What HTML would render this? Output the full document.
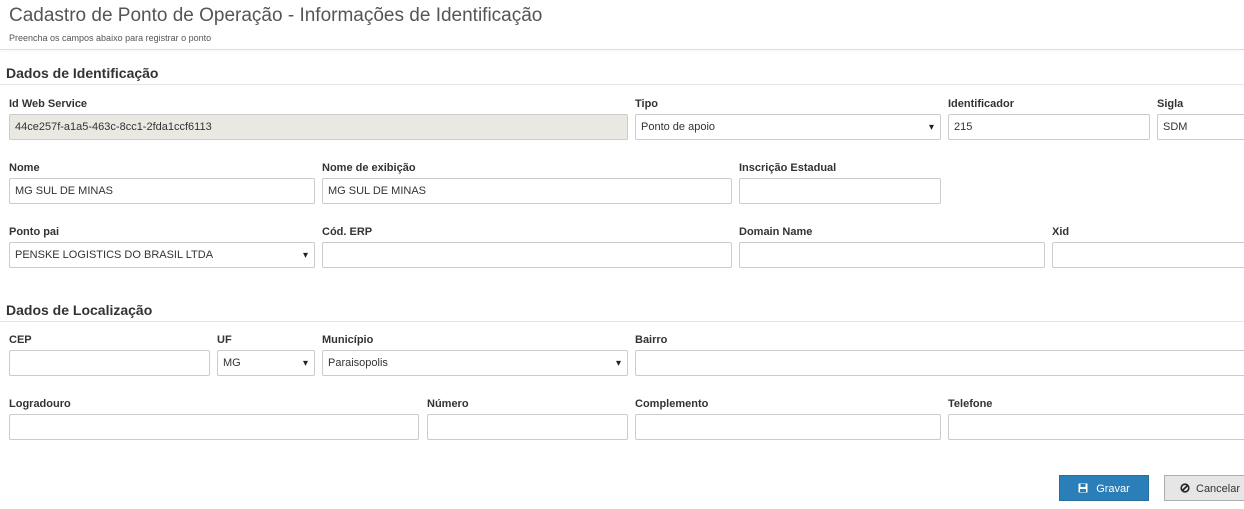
<!DOCTYPE html>
<html><head><meta charset="utf-8"><style>
body{margin:0;width:1244px;height:509px;background:#fff;overflow:hidden;position:relative;font-family:"Liberation Sans",sans-serif;color:#333}
.a{position:absolute}
.t{left:9px;top:5px;font-size:19px;color:#555}
.st{left:9px;top:33px;font-size:9px;color:#555}
.hr{left:0;right:0;height:1px;background:#e5e5e5}
.h{left:6px;font-size:14px;font-weight:bold;color:#333}
.l{font-size:11px;font-weight:bold;color:#333}
.i{height:24px;border:1px solid #ccc;border-radius:2px;background:#fff;font-size:11px;line-height:25px;padding-left:5px;box-sizing:content-box;color:#333}
.s:after{content:"▾";position:absolute;right:6px;top:0;font-size:10px;color:#222}
.btn{height:26px;font-size:11px;line-height:26px;text-align:center;box-sizing:border-box}
</style></head><body>
<div class="a t">Cadastro de Ponto de Operação - Informações de Identificação</div>
<div class="a st">Preencha os campos abaixo para registrar o ponto</div>
<div class="a hr" style="top:49px;background:#ddd;box-shadow:0 1px 2px #eee"></div>
<div class="a h" style="top:65px">Dados de Identificação</div>
<div class="a hr" style="top:84px"></div>

<div class="a l" style="left:9px;top:98px">Id Web Service</div>
<div class="a i" style="left:9px;top:114px;width:612px;background:#e9e8e3">44ce257f-a1a5-463c-8cc1-2fda1ccf6113</div>
<div class="a l" style="left:635px;top:98px">Tipo</div>
<div class="a i s" style="left:635px;top:114px;width:299px">Ponto de apoio</div>
<div class="a l" style="left:948px;top:98px">Identificador</div>
<div class="a i" style="left:948px;top:114px;width:195px">215</div>
<div class="a l" style="left:1157px;top:98px">Sigla</div>
<div class="a i" style="left:1157px;top:114px;width:100px">SDM</div>

<div class="a l" style="left:9px;top:162px">Nome</div>
<div class="a i" style="left:9px;top:178px;width:299px">MG SUL DE MINAS</div>
<div class="a l" style="left:322px;top:162px">Nome de exibição</div>
<div class="a i" style="left:322px;top:178px;width:403px">MG SUL DE MINAS</div>
<div class="a l" style="left:739px;top:162px">Inscrição Estadual</div>
<div class="a i" style="left:739px;top:178px;width:195px"></div>

<div class="a l" style="left:9px;top:226px">Ponto pai</div>
<div class="a i s" style="left:9px;top:242px;width:299px">PENSKE LOGISTICS DO BRASIL LTDA</div>
<div class="a l" style="left:322px;top:226px">Cód. ERP</div>
<div class="a i" style="left:322px;top:242px;width:403px"></div>
<div class="a l" style="left:739px;top:226px">Domain Name</div>
<div class="a i" style="left:739px;top:242px;width:299px"></div>
<div class="a l" style="left:1052px;top:226px">Xid</div>
<div class="a i" style="left:1052px;top:242px;width:200px"></div>

<div class="a h" style="top:302px">Dados de Localização</div>
<div class="a hr" style="top:321px"></div>

<div class="a l" style="left:9px;top:334px">CEP</div>
<div class="a i" style="left:9px;top:350px;width:194px"></div>
<div class="a l" style="left:217px;top:334px">UF</div>
<div class="a i s" style="left:217px;top:350px;width:91px">MG</div>
<div class="a l" style="left:322px;top:334px">Município</div>
<div class="a i s" style="left:322px;top:350px;width:299px">Paraisopolis</div>
<div class="a l" style="left:635px;top:334px">Bairro</div>
<div class="a i" style="left:635px;top:350px;width:620px"></div>

<div class="a l" style="left:9px;top:398px">Logradouro</div>
<div class="a i" style="left:9px;top:414px;width:403px"></div>
<div class="a l" style="left:427px;top:398px">Número</div>
<div class="a i" style="left:427px;top:414px;width:194px"></div>
<div class="a l" style="left:635px;top:398px">Complemento</div>
<div class="a i" style="left:635px;top:414px;width:299px"></div>
<div class="a l" style="left:948px;top:398px">Telefone</div>
<div class="a i" style="left:948px;top:414px;width:300px"></div>

<div class="a btn" style="left:1059px;top:475px;width:90px;background:#2a7fb8;color:#fff;border:1px solid #266fa0">
<svg width="10" height="10" viewBox="0 0 10 10" style="vertical-align:-1px;margin-right:8px"><rect x="0.5" y="0.5" width="9" height="9" fill="#fff"/><rect x="2.5" y="1" width="5" height="3" fill="#2a7fb8"/><rect x="2" y="6" width="6" height="3" fill="#2a7fb8"/></svg>Gravar</div>
<div class="a btn" style="left:1164px;top:475px;width:90px;background:#e6e6e6;color:#333;border:1px solid #adadad;text-align:left;padding-left:15px">
<svg width="10" height="10" viewBox="0 0 10 10" style="vertical-align:-1px;margin-right:6px"><circle cx="5" cy="5" r="3.8" fill="none" stroke="#222" stroke-width="1.6"/><line x1="2.5" y1="7.5" x2="7.5" y2="2.5" stroke="#222" stroke-width="1.6"/></svg>Cancelar</div>
</body></html>
